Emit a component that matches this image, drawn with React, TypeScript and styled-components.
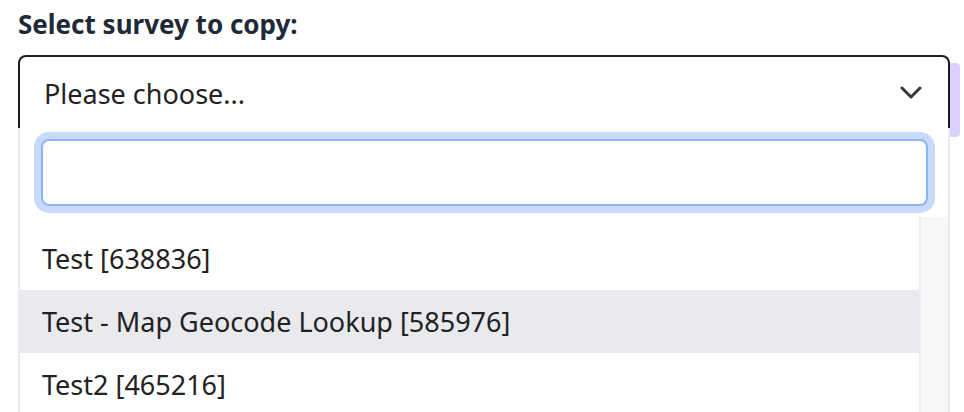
import styled, { createGlobalStyle } from "styled-components";

const surveys = [
  { id: 638836, name: "Test" },
  { id: 585976, name: "Test - Map Geocode Lookup" },
  { id: 465216, name: "Test2" },
];

const GlobalStyle = createGlobalStyle`
  html, body {
    margin: 0;
    padding: 0;
    background: #ffffff;
    overflow: hidden;
  }
  body {
    font-family: "Noto Sans", "Open Sans", sans-serif;
  }
`;

function Chevron() {
  return (
    <svg width="22" height="13" viewBox="0 0 22 13" fill="none">
      <path
        d="M2 2l9 9 9-9"
        stroke="#333a44"
        strokeWidth="3"
        strokeLinecap="round"
        strokeLinejoin="round"
      />
    </svg>
  );
}

export default function App() {
  const hovered = 585976;

  return (
    <Page>
      <GlobalStyle />
      <Label>Select survey to copy:</Label>
      <Row>
        <Field>
          <SelectBox>
            <span>Please choose...</span>
            <Chevron />
          </SelectBox>
          <Dropdown>
            <SearchWrap>
              <Search type="text" />
            </SearchWrap>
            <ListArea>
              <Options>
                {surveys.map((s) => (
                  <Option key={s.id} $active={s.id === hovered}>
                    {s.name} [{s.id}]
                  </Option>
                ))}
              </Options>
              <ScrollTrack />
            </ListArea>
          </Dropdown>
        </Field>
        <SideStrip />
      </Row>
    </Page>
  );
}

const Page = styled.div`
  display: flex;
  flex-direction: column;
  padding: 6px 0 0 18px;
  width: 964px;
  height: 412px;
  box-sizing: border-box;
`;

const Label = styled.div`
  font-size: 26px;
  font-weight: 700;
  color: #1f2a37;
  line-height: 36px;
  margin-bottom: 13px;
`;

const Row = styled.div`
  display: flex;
  align-items: flex-start;
`;

const Field = styled.div`
  width: 932px;
  display: flex;
  flex-direction: column;
`;

const SelectBox = styled.div`
  height: 71px;
  border: 2px solid #1c1c1c;
  border-bottom: none;
  border-radius: 8px 8px 0 0;
  display: flex;
  align-items: center;
  justify-content: space-between;
  padding: 0 26px 0 24px;
  font-size: 27px;
  color: #222222;

  span {
    margin-top: 1px;
  }
`;

const Dropdown = styled.div`
  border-left: 2px solid #ebebf3;
  border-right: 2px solid #ebebf3;
  display: flex;
  flex-direction: column;
`;

const SearchWrap = styled.div`
  padding: 11px 20px 11px 21px;
`;

const Search = styled.input`
  display: block;
  width: 100%;
  height: 67px;
  box-sizing: border-box;
  border: 2px solid #8cb4f6;
  border-radius: 8px;
  box-shadow: 0 0 0 7px #c9dafb;
  outline: none;
  background: #ffffff;
`;

const ListArea = styled.div`
  display: flex;
  height: 200px;
`;

const Options = styled.div`
  flex: 1;
  padding-top: 10px;
`;

const Option = styled.div<{ $active?: boolean }>`
  height: 63px;
  display: flex;
  align-items: center;
  padding-left: 22px;
  font-size: 27px;
  color: #222222;
  background: ${(p) => (p.$active ? "#e9eaee" : "transparent")};
`;

const ScrollTrack = styled.div`
  width: 27px;
  background: #f7f7f7;
  border-left: 2px solid #ececec;
`;

const SideStrip = styled.div`
  width: 10px;
  height: 74px;
  margin-top: 8px;
  background: #dccffd;
  border-radius: 0 4px 4px 0;
`;
